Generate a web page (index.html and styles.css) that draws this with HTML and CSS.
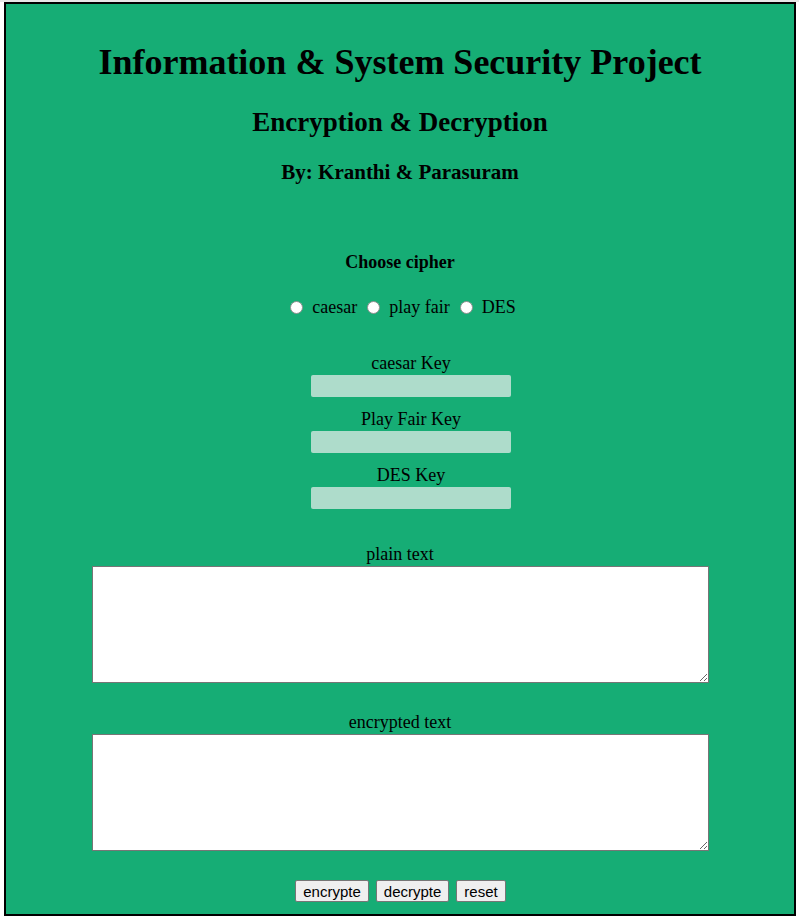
FILE: index.html
```html
<!DOCTYPE html>
<html>
<head>
<meta charset="utf-8">
<link rel="stylesheet" href="styles.css">
</head>
<body>
<div class="page">
  <h1 class="title">Information &amp; System Security Project</h1>
  <h2 class="subtitle">Encryption &amp; Decryption</h2>
  <h3 class="authors">By: Kranthi &amp; Parasuram</h3>

  <div class="choose">Choose cipher</div>
  <div class="radios">
    <label class="opt"><span class="radio"></span>caesar</label>
    <label class="opt"><span class="radio"></span>play fair</label>
    <label class="opt"><span class="radio"></span>DES</label>
  </div>

  <div class="keys">
    <div class="key">
      <div class="key-label">caesar Key</div>
      <div class="key-input"></div>
    </div>
    <div class="key">
      <div class="key-label">Play Fair Key</div>
      <div class="key-input"></div>
    </div>
    <div class="key">
      <div class="key-label">DES Key</div>
      <div class="key-input"></div>
    </div>
  </div>

  <div class="field first">
    <div class="field-label">plain text</div>
    <textarea class="area"></textarea>
  </div>
  <div class="field">
    <div class="field-label">encrypted text</div>
    <textarea class="area"></textarea>
  </div>

  <div class="buttons">
    <button class="btn">encrypte</button>
    <button class="btn">decrypte</button>
    <button class="btn">reset</button>
  </div>
</div>
</body>
</html>
```

FILE: styles.css
```css
html, body {
  margin: 0;
  padding: 0;
}
body {
  background: #ffffff;
  border-top: 2px solid #e6e6e6;
  padding: 0 3px 0 4px;
  font-family: "Liberation Serif", "Times New Roman", serif;
  font-size: 18px;
  color: #000;
}
.page {
  box-sizing: border-box;
  height: 914px;
  border: 2px solid #000;
  background: #16ad75;
  text-align: center;
  display: flex;
  flex-direction: column;
  align-items: center;
}
.title {
  margin: 38px 0 0;
  font-size: 36px;
  line-height: 41px;
  font-weight: bold;
}
.subtitle {
  margin: 24px 0 0;
  font-size: 27px;
  line-height: 31px;
  font-weight: bold;
}
.authors {
  margin: 22px 0 0;
  font-size: 21px;
  line-height: 24px;
  font-weight: bold;
}
.choose {
  margin-top: 68px;
  font-weight: bold;
  line-height: 21px;
}
.radios {
  margin-top: 24px;
  display: flex;
  align-items: center;
  line-height: 21px;
  padding-left: 6px;
}
.opt {
  display: flex;
  align-items: center;
}
.radio {
  box-sizing: border-box;
  width: 13px;
  height: 13px;
  border-radius: 50%;
  background: #fff;
  border: 1px solid #8f8f8f;
  margin: 0 9px 0 10px;
}
.opt:first-child .radio { margin-left: 0; }
.keys {
  margin-top: 35px;
  padding-left: 22px;
  display: flex;
  flex-direction: column;
  align-items: center;
  gap: 12px;
}
.key {
  display: flex;
  flex-direction: column;
  align-items: center;
}
.key-label {
  line-height: 21px;
}
.key-input {
  width: 200px;
  height: 22px;
  margin-top: 1px;
  background: #aedccb;
  border-radius: 2px;
}
.field {
  display: flex;
  flex-direction: column;
  align-items: center;
  margin-top: 29px;
}
.field.first {
  margin-top: 35px;
}
.field-label {
  line-height: 21px;
}
.area {
  box-sizing: border-box;
  display: block;
  width: 617px;
  height: 117px;
  margin-top: 1px;
  border: 1px solid #767676;
  background: #fff;
  padding: 2px;
  font-family: "Liberation Mono", monospace;
  font-size: 13px;
}
.buttons {
  margin-top: 29px;
  display: flex;
  gap: 7px;
  margin-left: 1px;
}
.btn {
  box-sizing: border-box;
  height: 22px;
  padding: 1px 7px;
  font-family: "Liberation Sans", Arial, sans-serif;
  font-size: 15px;
  color: #000;
  background: #efefef;
  border: 1px solid #767676;
  border-radius: 2px;
}
```
